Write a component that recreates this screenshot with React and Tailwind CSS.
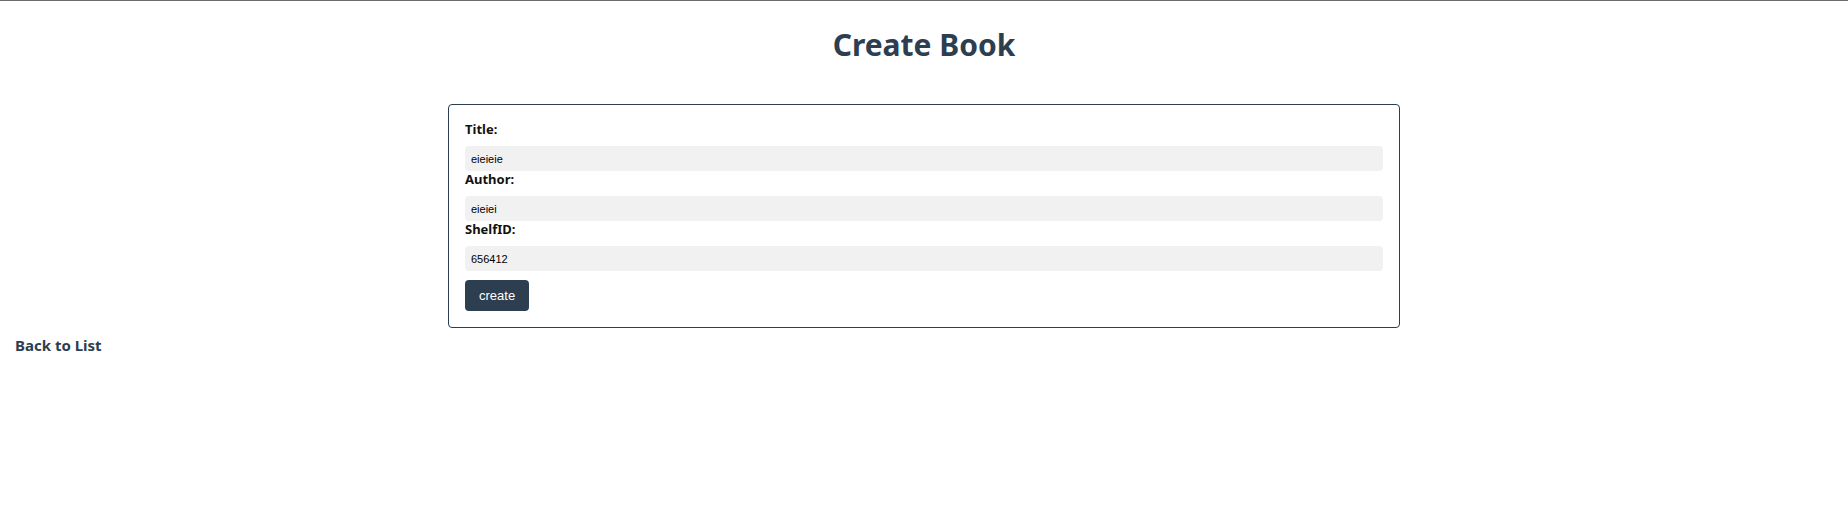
import React, { useState } from "react";

const Field = ({ label, value, onChange }) => (
    <div>
        <label className="block text-[13px] leading-[16px] font-bold text-[#111] mb-[9px]">{label}</label>
        <input
            value={value}
            onChange={e => onChange(e.target.value)}
            className="block w-full h-[25px] bg-[#f1f1f1] rounded-[4px] px-[6px] text-[11px] text-black outline-none font-['Liberation_Sans',Arial,sans-serif]"
        />
    </div>
);

const App = () => {
    const [title, setTitle] = useState("eieieie");
    const [author, setAuthor] = useState("eieiei");
    const [shelf, setShelf] = useState("656412");

    return (
        <div className="min-h-[517px] bg-white border-t border-[#6b6b6b] font-['Noto_Sans',sans-serif]">
            <h1 className="pt-[25px] text-center text-[30px] leading-[38px] font-bold text-[#2c3e50]">Create Book</h1>

            {/* Form card */}
            <div className="w-[952px] mx-auto mt-[40px] border border-[#2c3e50] rounded-[4px] p-4">
                <Field label="Title:" value={title} onChange={setTitle} />
                <Field label="Author:" value={author} onChange={setAuthor} />
                <Field label="ShelfID:" value={shelf} onChange={setShelf} />
                <button className="mt-[9px] h-[31px] px-[14px] bg-[#2c3e50] text-white rounded-[4px] text-[13px] font-['Liberation_Sans',Arial,sans-serif]">
                    create
                </button>
            </div>

            <a href="#" className="block mt-[8px] ml-[15px] w-fit text-[15px] leading-[18px] font-bold text-[#2c3e50]">Back to List</a>
        </div>
    );
};
export default App;
